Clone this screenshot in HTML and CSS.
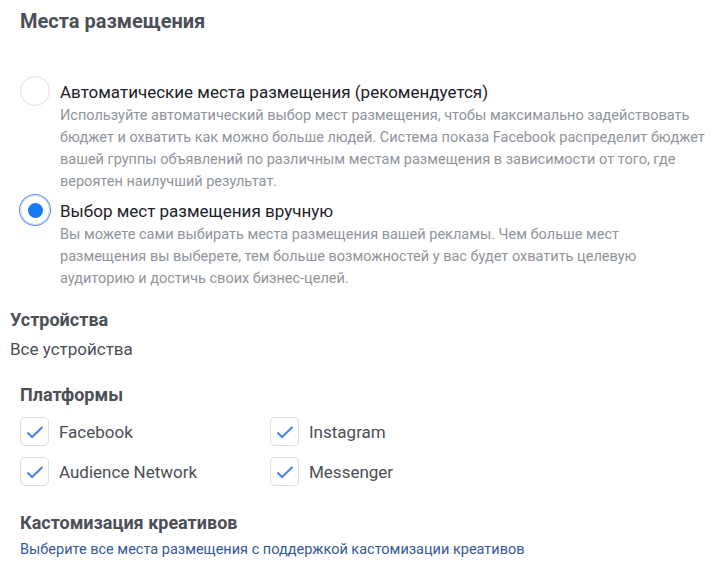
FILE: index.html
```html
<!DOCTYPE html>
<html lang="ru">
<head>
    <meta charset="UTF-8">
    <title>Места размещения</title>
    <link rel="stylesheet" href="styles.css">
</head>
<body>
    <h2 class="title">Места размещения</h2>

    <div class="options">
        <div class="option">
            <span class="radio"></span>
            <div class="option-body">
                <div class="option-label">Автоматические места размещения (рекомендуется)</div>
                <div class="option-desc">Используйте автоматический выбор мест размещения, чтобы максимально задействовать бюджет и охватить как можно больше людей. Система показа Facebook распределит бюджет вашей группы объявлений по различным местам размещения в зависимости от того, где вероятен наилучший результат.</div>
            </div>
        </div>
        <div class="option">
            <span class="radio checked"></span>
            <div class="option-body">
                <div class="option-label">Выбор мест размещения вручную</div>
                <div class="option-desc">Вы можете сами выбирать места размещения вашей рекламы. Чем больше мест<br>размещения вы выберете, тем больше возможностей у вас будет охватить целевую аудиторию и достичь своих бизнес-целей.</div>
            </div>
        </div>
    </div>

    <div class="devices">
        <h3 class="subtitle">Устройства</h3>
        <div class="devices-value">Все устройства</div>
    </div>

    <div class="platforms">
        <h3 class="subtitle">Платформы</h3>
        <div class="platform-grid">
            <label class="check"><span class="box"><svg viewBox="0 0 18 18"><path d="M1.5 9.5l4.5 4.5L16.5 4"/></svg></span>Facebook</label>
            <label class="check"><span class="box"><svg viewBox="0 0 18 18"><path d="M1.5 9.5l4.5 4.5L16.5 4"/></svg></span>Instagram</label>
            <label class="check"><span class="box"><svg viewBox="0 0 18 18"><path d="M1.5 9.5l4.5 4.5L16.5 4"/></svg></span>Audience Network</label>
            <label class="check"><span class="box"><svg viewBox="0 0 18 18"><path d="M1.5 9.5l4.5 4.5L16.5 4"/></svg></span>Messenger</label>
        </div>
    </div>

    <div class="creative">
        <h3 class="subtitle">Кастомизация креативов</h3>
        <a class="link" href="#">Выберите все места размещения с поддержкой кастомизации креативов</a>
    </div>
</body>
</html>
```

FILE: styles.css
```css
body {
    margin: 0;
    padding: 0;
    font-family: Roboto, "Liberation Sans", Arial, sans-serif;
    background: #fff;
    color: #1d2129;
}
.title {
    margin: 0;
    padding: 9px 0 0 20px;
    font-size: 20px;
    font-weight: 700;
    color: #4b4f56;
    line-height: 24px;
}
.options {
    padding: 43px 0 0 20px;
}
.option {
    display: flex;
    gap: 10px;
    margin-bottom: 2px;
}
.radio {
    flex: none;
    width: 28px;
    height: 28px;
    border: 1px solid #dadde1;
    border-radius: 50%;
    position: relative;
}
.radio.checked {
    border-color: #ccd0d5;
    box-shadow: 0 0 0 1px #5b91f5;
}
.radio.checked::after {
    content: "";
    position: absolute;
    left: 6.5px;
    top: 6.5px;
    width: 15px;
    height: 15px;
    border-radius: 50%;
    background: #1877f2;
}
.option-label {
    font-size: 17px;
    line-height: 32px;
    color: #1d2129;
}
.option-desc {
    font-size: 14.5px;
    line-height: 22px;
    color: #90949c;
    width: 652px;
    margin-top: -3px;
}
.devices {
    padding: 16px 0 0 10px;
}
.subtitle {
    margin: 0;
    font-size: 18px;
    font-weight: 700;
    color: #4b4f56;
    line-height: 24px;
}
.devices-value {
    font-size: 17px;
    line-height: 24px;
    color: #4b4f56;
    margin-top: 5px;
}
.platforms {
    padding: 22px 0 0 20px;
}
.platform-grid {
    display: grid;
    grid-template-columns: 250px 250px;
    row-gap: 11px;
    margin-top: 10px;
}
.check {
    display: flex;
    align-items: center;
    gap: 10px;
    font-size: 17px;
    color: #4b4f56;
}
.box {
    width: 27px;
    height: 27px;
    border: 1px solid #dadde1;
    border-radius: 5px;
    display: flex;
    align-items: center;
    justify-content: center;
}
.box svg {
    width: 18px;
    height: 18px;
    fill: none;
    stroke: #4a80f0;
    stroke-width: 2;
}
.creative {
    padding: 25px 0 0 20px;
}
.link {
    display: block;
    margin-top: 6px;
    font-size: 14.5px;
    color: #365899;
    text-decoration: none;
}
```
